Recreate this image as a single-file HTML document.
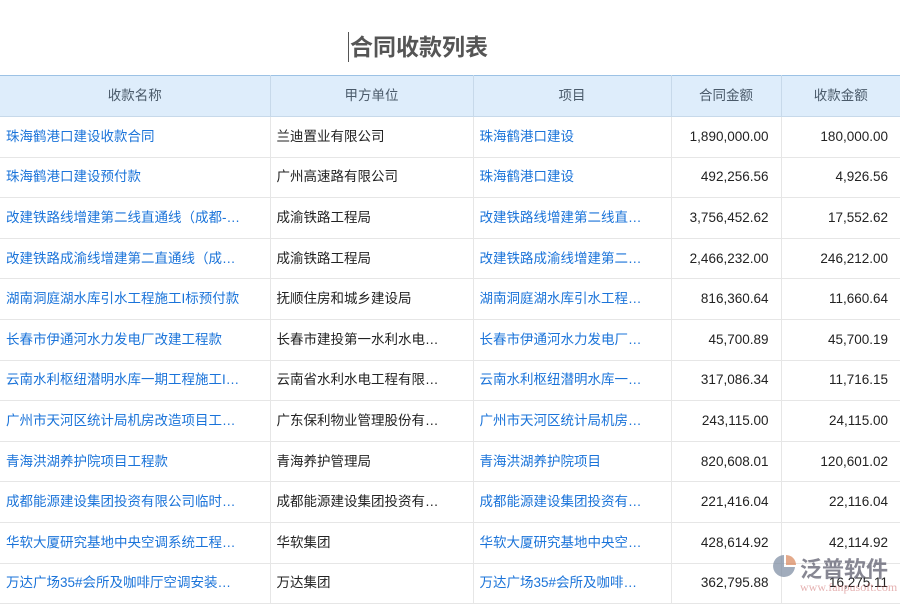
<!DOCTYPE html>
<html><head><meta charset="utf-8"><style>
body{margin:0;width:900px;height:600px;overflow:hidden;background:#fff;font-family:"Liberation Sans","Noto Sans CJK SC",sans-serif;position:relative}
.title{position:absolute;left:348px;top:32px;font-size:23px;font-weight:bold;color:#555;border-left:1px solid #555;padding-left:1px;line-height:30px}
table{position:absolute;top:75px;left:0;border-collapse:collapse;width:900px;table-layout:fixed;font-size:13.5px}
th{background:#deedfb;color:#4a5a6a;font-weight:normal;height:40px;padding:0;line-height:16px;border-top:1px solid #9cc2e5;border-bottom:1px solid #c7d9ea;border-right:1px solid #c7d9ea;box-sizing:border-box}
tr.r{height:40.6px}
td{padding:0 6px;line-height:16px;vertical-align:middle;border-bottom:1px solid #e6e6e6;border-right:1px solid #e6e6e6;white-space:nowrap;overflow:hidden;color:#222}
td.l{color:#1a73d9}
td.n{text-align:right;padding-right:12px}
tr td:last-child,tr th:last-child{border-right:none}
.logo{position:absolute;left:800px;top:552px;font-size:22px;color:#556;opacity:.7;font-weight:bold}
.url{position:absolute;left:800px;top:580px;font-size:12px;color:#c66;opacity:.5;font-family:"Liberation Serif",serif}
</style></head><body>
<div class="title">合同收款列表</div>
<table>
<colgroup><col style="width:270px"><col style="width:203px"><col style="width:198px"><col style="width:110px"><col style="width:119px"></colgroup>
<tr style="height:41px"><th>收款名称</th><th>甲方单位</th><th>项目</th><th>合同金额</th><th>收款金额</th></tr>
<tr class="r"><td class="l">珠海鹤港口建设收款合同</td><td>兰迪置业有限公司</td><td class="l">珠海鹤港口建设</td><td class="n">1,890,000.00</td><td class="n">180,000.00</td></tr>
<tr class="r"><td class="l">珠海鹤港口建设预付款</td><td>广州高速路有限公司</td><td class="l">珠海鹤港口建设</td><td class="n">492,256.56</td><td class="n">4,926.56</td></tr>
<tr class="r"><td class="l">改建铁路线增建第二线直通线（成都-…</td><td>成渝铁路工程局</td><td class="l">改建铁路线增建第二线直…</td><td class="n">3,756,452.62</td><td class="n">17,552.62</td></tr>
<tr class="r"><td class="l">改建铁路成渝线增建第二直通线（成…</td><td>成渝铁路工程局</td><td class="l">改建铁路成渝线增建第二…</td><td class="n">2,466,232.00</td><td class="n">246,212.00</td></tr>
<tr class="r"><td class="l">湖南洞庭湖水库引水工程施工I标预付款</td><td>抚顺住房和城乡建设局</td><td class="l">湖南洞庭湖水库引水工程…</td><td class="n">816,360.64</td><td class="n">11,660.64</td></tr>
<tr class="r"><td class="l">长春市伊通河水力发电厂改建工程款</td><td>长春市建投第一水利水电…</td><td class="l">长春市伊通河水力发电厂…</td><td class="n">45,700.89</td><td class="n">45,700.19</td></tr>
<tr class="r"><td class="l">云南水利枢纽潜明水库一期工程施工I…</td><td>云南省水利水电工程有限…</td><td class="l">云南水利枢纽潜明水库一…</td><td class="n">317,086.34</td><td class="n">11,716.15</td></tr>
<tr class="r"><td class="l">广州市天河区统计局机房改造项目工…</td><td>广东保利物业管理股份有…</td><td class="l">广州市天河区统计局机房…</td><td class="n">243,115.00</td><td class="n">24,115.00</td></tr>
<tr class="r"><td class="l">青海洪湖养护院项目工程款</td><td>青海养护管理局</td><td class="l">青海洪湖养护院项目</td><td class="n">820,608.01</td><td class="n">120,601.02</td></tr>
<tr class="r"><td class="l">成都能源建设集团投资有限公司临时…</td><td>成都能源建设集团投资有…</td><td class="l">成都能源建设集团投资有…</td><td class="n">221,416.04</td><td class="n">22,116.04</td></tr>
<tr class="r"><td class="l">华软大厦研究基地中央空调系统工程…</td><td>华软集团</td><td class="l">华软大厦研究基地中央空…</td><td class="n">428,614.92</td><td class="n">42,114.92</td></tr>
<tr class="r"><td class="l">万达广场35#会所及咖啡厅空调安装…</td><td>万达集团</td><td class="l">万达广场35#会所及咖啡…</td><td class="n">362,795.88</td><td class="n">16,275.11</td></tr>
</table>
<svg style="position:absolute;left:770px;top:553px;opacity:.7" width="28" height="26"><path d="M14 2 A11 11 0 1 0 25 14 L14 14 Z" fill="#7a8aa0"/><path d="M16 2 A10 10 0 0 1 26 12 L16 12Z" fill="#d9855a"/></svg>
<div class="logo">泛普软件</div>
<div class="url">www.fanpusoft.com</div>
</body></html>
